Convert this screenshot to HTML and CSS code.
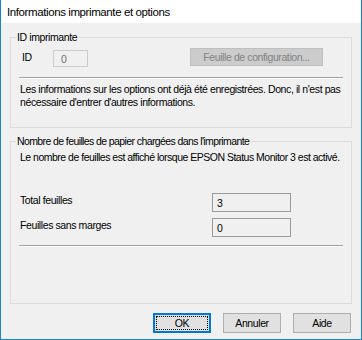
FILE: index.html
```html
<!DOCTYPE html>
<html lang="fr">

<head>
  <meta charset="UTF-8">
  <meta name="viewport" content="width=device-width, initial-scale=1.0">
  <title>Informations imprimante et options</title>
  <link rel="stylesheet" href="styles.css">
</head>

<body>

  <!-- Dialog window -->
  <div class="window">
    <div class="titlebar">Informations imprimante et options</div>

    <div class="dialog">

      <fieldset class="group">
        <legend>ID imprimante</legend>
        <div class="group-body group-id">
          <div class="id-row">
            <span class="id-label">ID</span>
            <input class="id-field" type="text" value="0" disabled>
            <button class="btn btn-config" type="button" disabled>Feuille de configuration...</button>
          </div>
          <div class="sep"></div>
          <p class="note">Les informations sur les options ont déjà été enregistrées. Donc, il n'est pas<br>nécessaire d'entrer d'autres informations.</p>
        </div>
      </fieldset>

      <fieldset class="group group-sheets">
        <legend>Nombre de feuilles de papier chargées dans l'imprimante</legend>
        <div class="group-body">
          <p class="note note-tight">Le nombre de feuilles est affiché lorsque EPSON Status Monitor 3 est activé.</p>
          <div class="count-row count-first">
            <span class="count-label">Total feuilles</span>
            <input class="count-field" type="text" value="3" readonly>
          </div>
          <div class="count-row">
            <span class="count-label">Feuilles sans marges</span>
            <input class="count-field" type="text" value="0" readonly>
          </div>
          <div class="sep sep-bottom"></div>
        </div>
      </fieldset>

      <div class="buttons">
        <button class="btn btn-ok" type="button">OK</button>
        <button class="btn" type="button">Annuler</button>
        <button class="btn" type="button">Aide</button>
      </div>

    </div>
  </div>

</body>

</html>
```

FILE: styles.css
```css
html,
body {
  margin: 0;
  padding: 0;
  background: #f0f0f0;
}

.window {
  width: 362px;
  height: 340px;
  box-sizing: border-box;
  display: flex;
  flex-direction: column;
  border: 1px solid #1883d7;
  border-top: none;
  background: #f0f0f0;
  font-family: "Liberation Sans", Arial, sans-serif;
  font-size: 10.5px;
  letter-spacing: -0.4px;
  color: #000;
  white-space: nowrap;
}

.titlebar {
  flex: none;
  height: 23px;
  line-height: 24px;
  padding-left: 6px;
  background: #fff;
  font-size: 11.5px;
  letter-spacing: -0.4px;
}

.dialog {
  flex: 1;
  display: flex;
  flex-direction: column;
  padding: 7px 9px 0 9px;
}

/* group boxes */
.group {
  margin: 0;
  padding: 0;
  min-width: 0;
  border: 1px solid #dcdcdc;
}

.group legend {
  margin-left: 5px;
  padding: 0 1px;
  line-height: 14px;
}

.group-sheets {
  margin-top: 6px;
}

.group-sheets legend {
  letter-spacing: -0.6px;
}

.group-body {
  padding: 4px 8px 18px 8px;
}

.group-sheets .group-body {
  padding: 3px 8px 56px 8px;
}

.id-row {
  display: flex;
  align-items: flex-start;
  height: 19px;
}

.id-label {
  width: 31px;
  padding-left: 3px;
  margin-top: 2px;
  line-height: 14px;
}

.id-field {
  width: 35px;
  height: 17px;
  margin: 2px 0 0 0;
  padding: 0 0 0 7px;
  box-sizing: border-box;
  border: 1px solid #cccccc;
  background: #f0f0f0;
  color: #6d6d6d;
  font: inherit;
  letter-spacing: inherit;
  outline: none;
}

.sep {
  margin-top: 10px;
  border-top: 1px solid #a0a0a0;
  border-bottom: 1px solid #fff;
}

.sep-bottom {
  margin-top: 8px;
}

.note {
  margin: 4px 0 0 1px;
  line-height: 13px;
}

.group-sheets .note {
  margin-top: 0;
}

.note-tight {
  letter-spacing: -0.5px;
}

.count-row {
  display: flex;
  align-items: flex-start;
  margin-top: 6px;
}

.count-first {
  margin-top: 29px;
}

.count-label {
  width: 192px;
  padding-left: 1px;
  line-height: 14px;
}

.count-field {
  width: 79px;
  height: 19px;
  margin: 0;
  padding: 0 0 0 4px;
  box-sizing: border-box;
  border: 1px solid #9a9a9a;
  background: #f0f0f0;
  color: #000;
  font: inherit;
  letter-spacing: inherit;
  outline: none;
}

/* buttons */
.btn {
  flex: none;
  height: 20px;
  width: 58px;
  margin: 0;
  padding: 0;
  box-sizing: border-box;
  border: 1px solid #adadad;
  background: #e1e1e1;
  color: #000;
  font: inherit;
  letter-spacing: inherit;
  text-align: center;
  white-space: nowrap;
}

.btn-config {
  width: 133px;
  height: 18px;
  margin-left: 102px;
  border-color: #bfbfbf;
  background: #cccccc;
  color: #838383;
}

.buttons {
  display: flex;
  justify-content: flex-end;
  gap: 12px;
  margin-top: 9px;
  padding-right: 1px;
}

.btn-ok {
  border: 2px solid #0078d7;
  outline: 1px dotted #000;
  outline-offset: -4px;
}
```
